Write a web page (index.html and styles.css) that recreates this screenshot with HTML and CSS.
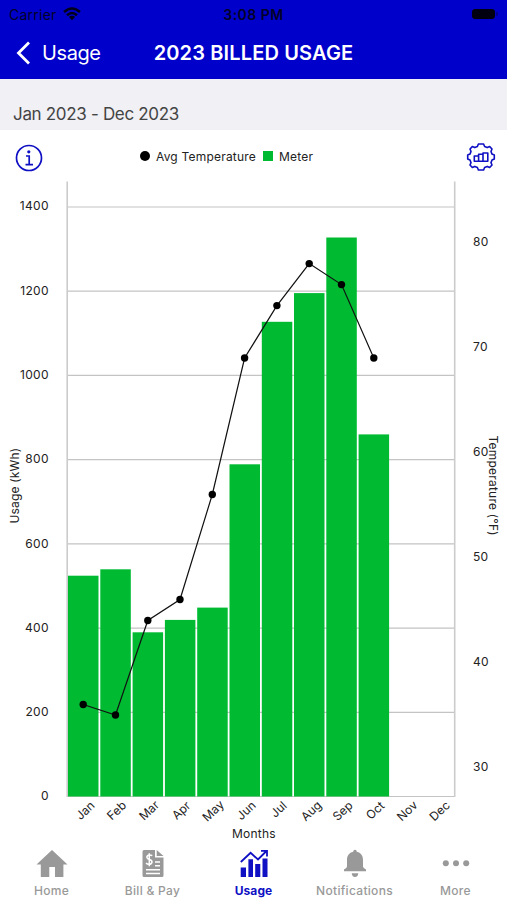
FILE: index.html
```html
<!DOCTYPE html>
<html lang="en">
<head>
<meta charset="utf-8">
<title>2023 Billed Usage</title>
<link rel="stylesheet" href="styles.css">
</head>
<body>
<div class="app">
  <header class="header">
    <div class="status">
      <div class="carrier"><span class="carrier-name">Carrier</span>
        <svg width="18" height="14" viewBox="0 0 18 14"><g fill="none" stroke="#000018" stroke-width="2.5"><path d="M1 5Q9-2 17 5"/><path d="M4 8.2Q9 3.7 14 8.2"/></g><path d="M9 13.2L5.9 10Q9 7.4 12.1 10Z" fill="#000018"/></svg>
      </div>
      <span class="time">3:08 PM</span>
      <div class="power"><span class="battery"></span><span class="battery-tip"></span></div>
    </div>
    <nav class="nav">
      <a class="back"><svg width="16" height="24" viewBox="0 0 16 24"><path d="M13 1.5L2.5 12 13 22.5" fill="none" stroke="#fff" stroke-width="2.8"/></svg><span class="back-text">Usage</span></a>
      <h1 class="title">2023 BILLED USAGE</h1>
      <span></span>
    </nav>
  </header>
  <div class="range"><span class="range-text">Jan 2023 - Dec 2023</span></div>
  <main>
    <div class="tools">
      <svg class="info" width="28" height="28" viewBox="0 0 28 28"><circle cx="14" cy="14" r="12.5" fill="none" stroke="#0f0fc4" stroke-width="1.7"/><circle cx="13.8" cy="7.8" r="1.6" fill="#0f0fc4"/><path d="M11 12H14.2V20.5M10.5 20.6H18" fill="none" stroke="#0f0fc4" stroke-width="1.7"/></svg>
      <div class="legend"><span class="dot"></span><span class="legend-temp">Avg Temperature</span><span class="square"></span><span class="legend-meter">Meter</span></div>
      <svg class="gear" width="30" height="30" viewBox="0 0 30 30"><g fill="none" stroke="#0f0fc4" stroke-width="1.6" stroke-linejoin="round"><path d="M12.4 2H17.6L18.6 4.5 21.2 5.6 23.7 4.6 26 7 25 9.5 26 12.1 28.3 13V17L26 18 25 20.6 26 23 23.7 25.5 21.2 24.4 18.6 25.5 17.6 28H12.4L11.4 25.5 8.8 24.4 6.3 25.5 4 23 5 20.6 4 18 1.7 17V13L4 12.1 5 9.5 4 7 6.3 4.6 8.8 5.6 11.4 4.5Z"/><path d="M8.3 19.2V14H12.6V19.2ZM12.6 19.2V12.2H17V19.2ZM17 19.2V11H21.8V19.2Z"/></g></svg>
    </div>
    <svg class="chart" width="507" height="661" viewBox="0 181 507 661">
      <path class="grid" d="M67.5 207H454.5M67.5 291.2H454.5M67.5 375.4H454.5M67.5 459.7H454.5M67.5 543.9H454.5M67.5 628.1H454.5M67.5 712.3H454.5M67.5 796.5H454.5"/>
      <path class="axis" d="M67.2 181.5V797M454.7 181.5V797"/>
      <g class="bars">
        <rect x="68" y="575.7" width="30.5" height="220.8"/><rect x="100.3" y="569.3" width="30.5" height="227.2"/><rect x="132.6" y="632.3" width="30.5" height="164.2"/><rect x="164.9" y="619.9" width="30.5" height="176.6"/><rect x="197.2" y="607.6" width="30.5" height="188.9"/><rect x="229.5" y="464.3" width="30.5" height="332.2"/><rect x="261.8" y="321.8" width="30.5" height="474.7"/><rect x="294" y="293.1" width="30.5" height="503.4"/><rect x="326.3" y="237.5" width="30.5" height="559"/><rect x="358.6" y="434.4" width="30.5" height="362.1"/>
      </g>
      <polyline class="line" points="83.2,704.5 115.5,715 147.8,620.5 180,599.5 212.3,494.5 244.6,358 276.9,305.6 309.2,263.6 341.5,284.6 373.8,358"/>
      <g class="points"><circle cx="83.2" cy="704.5" r="3.7"/><circle cx="115.5" cy="715" r="3.7"/><circle cx="147.8" cy="620.5" r="3.7"/><circle cx="180" cy="599.5" r="3.7"/><circle cx="212.3" cy="494.5" r="3.7"/><circle cx="244.6" cy="358" r="3.7"/><circle cx="276.9" cy="305.6" r="3.7"/><circle cx="309.2" cy="263.6" r="3.7"/><circle cx="341.5" cy="284.6" r="3.7"/><circle cx="373.8" cy="358" r="3.7"/></g>
      <g class="label end"><text x="48.8" y="210.3">1400</text><text x="48.8" y="294.8">1200</text><text x="48.8" y="379">1000</text><text x="48.8" y="463.3">800</text><text x="48.8" y="547.5">600</text><text x="48.8" y="631.8">400</text><text x="48.8" y="716">200</text><text x="48.8" y="800.3">0</text></g>
      <g class="label"><text x="473" y="246.3">80</text><text x="473" y="351.3">70</text><text x="473" y="456">60</text><text x="473" y="561">50</text><text x="473" y="666">40</text><text x="473" y="771.3">30</text></g>
      <g class="label mid">
        <text transform="translate(88 813.5) rotate(-43)">Jan</text><text transform="translate(119.5 813.5) rotate(-43)">Feb</text><text transform="translate(152 813.5) rotate(-43)">Mar</text><text transform="translate(184 813.5) rotate(-43)">Apr</text><text transform="translate(216 814) rotate(-43)">May</text><text transform="translate(249 813.5) rotate(-43)">Jun</text><text transform="translate(281.5 812.5) rotate(-43)">Jul</text><text transform="translate(314 814) rotate(-43)">Aug</text><text transform="translate(345.5 814) rotate(-43)">Sep</text><text transform="translate(378 813.5) rotate(-43)">Oct</text><text transform="translate(410 814) rotate(-43)">Nov</text><text transform="translate(442.5 814) rotate(-43)">Dec</text>
      </g>
      <g class="label">
        <text x="232" y="837.5" textLength="44">Months</text>
        <text transform="translate(18.8 523.5) rotate(-90)" textLength="76">Usage (kWh)</text>
        <text transform="translate(489 435.5) rotate(90)" textLength="100.5">Temperature (°F)</text>
      </g>
    </svg>
  </main>
  <nav class="tabs">
    <a class="tab"><svg width="32" height="30" viewBox="0 0 32 30"><path d="M16 1L31.5 15.5H27.4V28H19V18H13.3V28H4.8V15.5H.5Z" fill="#999"/></svg><span class="tab-text">Home</span></a>
    <a class="tab"><svg width="24" height="30" viewBox="0 0 24 30"><path d="M3 1H14V8.5H22.5V26.5Q22.5 28 21 28H3Q1.5 28 1.5 26.5V2.5Q1.5 1 3 1ZM15.7 1L22.5 6.9H15.7Z" fill="#999"/><path d="M11.3 6.7Q9.5 5.7 7.5 6.2 5.5 7 6 8.7 6.3 10.2 8.3 10.6 11.2 11.3 11 13.3 10.5 15.3 8 15.3 6.2 15.2 5 14.2M8.3 4.3V17.2M14 13H19M14 16.7H19M5 20.8H19M5 24.6H19" fill="none" stroke="#fff" stroke-width="1.5"/></svg><span class="tab-text">Bill &amp; Pay</span></a>
    <a class="tab active"><svg width="30" height="30" viewBox="0 0 30 30"><path d="M1.7 18.5H7V28H1.7ZM9.4 10.2H14V28H9.4ZM16.2 15H21.3V28H16.2ZM23.5 9.5H28.5V28H23.5Z" fill="#0f0fc4"/><path d="M1.8 13L11.6 3.8 19 10.5 27 2.5M22 1.8H28V7.5" fill="none" stroke="#0f0fc4" stroke-width="1.8"/></svg><span class="tab-text">Usage</span></a>
    <a class="tab"><svg width="24" height="30" viewBox="0 0 24 30"><path d="M12 .8Q13.7 .8 13.8 2.8C18 3.8 20 6.8 20 11V17.5Q20 19.2 23 20.5V22.3H1V20.5Q4 19.2 4 17.5V11C4 6.8 6 3.8 10.2 2.8Q10.3 .8 12 .8ZM8.7 24.3H15.3Q15 28 12 28 9 28 8.7 24.3Z" fill="#999"/></svg><span class="tab-text">Notifications</span></a>
    <a class="tab"><svg width="28" height="30" viewBox="0 0 28 30"><g fill="#999"><circle cx="3.8" cy="14.2" r="3"/><circle cx="14" cy="14.2" r="3"/><circle cx="24.2" cy="14.2" r="3"/></g></svg><span class="tab-text">More</span></a>
  </nav>
</div>
</body>
</html>
```
FILE: styles.css
```css
* { box-sizing: border-box; }
body { margin: 0; background: #fff; font-family: Inter, "Liberation Sans", sans-serif; color: #222; }
svg { display: block; flex: none; }
.app { width: 507px; height: 900px; display: flex; flex-direction: column; overflow: hidden; white-space: nowrap; }
.header { height: 79px; background: #0000cb; flex: none; }
.status { height: 27px; display: grid; grid-template-columns: 1fr auto 1fr; align-items: center; padding: 1px 9px 0; color: #000028; font-size: 14px; }
.carrier { display: flex; align-items: center; gap: 6px; }
.carrier-name { letter-spacing: .25px; }
.time { font-weight: 600; font-size: 14px; letter-spacing: .5px; }
.power { display: flex; justify-content: flex-end; align-items: center; gap: 1px; }
.battery { width: 23px; height: 10px; border-radius: 3px; background: #000010; }
.battery-tip { width: 2px; height: 4px; border-radius: 1px; background: #000090; }
.nav { height: 51px; display: grid; grid-template-columns: 1fr auto 1fr; align-items: center; padding: 0 16px; color: #fff; }
.back { display: flex; align-items: center; gap: 10px; font-size: 20px; letter-spacing: -.4px; }
.title { margin: 0; font-size: 20px; font-weight: 600; letter-spacing: .15px; }
.range { height: 51px; flex: none; background: #f0f0f5; padding: 24px 13px 0; font-size: 17px; line-height: 22px; letter-spacing: -.32px; color: #444; }
.tools { height: 51px; display: flex; align-items: center; padding: 5px 11px 0 15px; }
.legend { display: flex; align-items: center; font-size: 12px; margin: -4px 0 0 97px; }
.dot { width: 10px; height: 10px; border-radius: 50%; background: #000; margin-right: 6px; }
.square { width: 10px; height: 10px; background: #00bb32; margin: 0 6px 0 7px; }
.legend-temp, .legend-meter { letter-spacing: .2px; }
.gear { margin: -3px 0 0 auto; }
.grid { stroke: #c4c4c4; stroke-width: 1.2; fill: none; }
.axis { stroke: #ccc; stroke-width: 1.6; }
.bars { fill: #00bb32; }
.line { fill: none; stroke: #111; stroke-width: 1.2; }
.points { fill: #000; }
.label { font-size: 12px; fill: #222; letter-spacing: .3px; }
.end { text-anchor: end; }
.mid { text-anchor: middle; letter-spacing: 0; }
.tabs { height: 58px; flex: none; display: grid; grid-template-columns: repeat(5, 101px); padding: 7px 1px 0; }
.tab { display: flex; flex-direction: column; align-items: center; color: #999; font-size: 12px; font-weight: 500; line-height: 15px; }
.tab-text { margin-top: 4px; letter-spacing: .3px; }
.active { color: #0f0fc4; font-weight: 700; }
.active .tab-text { letter-spacing: .1px; }
```
